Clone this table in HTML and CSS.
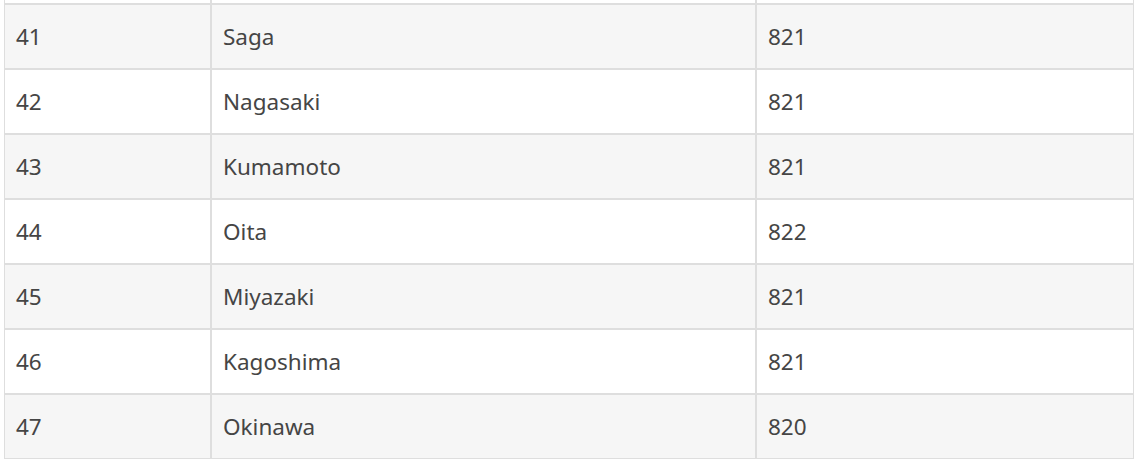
FILE: index.html
```html
<!DOCTYPE html>
<html lang="en">
<head>
<meta charset="utf-8">
<title>Prefectures</title>
<link rel="stylesheet" href="styles.css">
</head>
<body>
<div class="page">
  <table class="data-table">
    <colgroup>
      <col class="col-id">
      <col class="col-name">
      <col class="col-code">
    </colgroup>
    <tbody>
      <tr class="row-even row-partial"><td></td><td></td><td></td></tr>
      <tr class="row-odd"><td>41</td><td>Saga</td><td>821</td></tr>
      <tr class="row-even"><td>42</td><td>Nagasaki</td><td>821</td></tr>
      <tr class="row-odd"><td>43</td><td>Kumamoto</td><td>821</td></tr>
      <tr class="row-even"><td>44</td><td>Oita</td><td>822</td></tr>
      <tr class="row-odd"><td>45</td><td>Miyazaki</td><td>821</td></tr>
      <tr class="row-even"><td>46</td><td>Kagoshima</td><td>821</td></tr>
      <tr class="row-odd"><td>47</td><td>Okinawa</td><td>820</td></tr>
    </tbody>
  </table>
</div>
</body>
</html>
```

FILE: styles.css
```css
html, body {
  margin: 0;
  padding: 0;
  background: #ffffff;
}

.page {
  padding: 0 4px;
  overflow: hidden;
  height: 465px;
}

.data-table {
  width: 1130px;
  margin-top: -61px;
  border-collapse: separate;
  border-spacing: 0;
  table-layout: fixed;
  font-family: "Segoe UI", "Noto Sans", "Open Sans", sans-serif;
  font-size: 22.5px;
  font-weight: 400;
  color: #454545;
}

.col-id { width: 207px; }
.col-name { width: 545px; }
.col-code { width: 378px; }

.data-table td {
  border: 1px solid #dedede;
  padding: 16px 12px 16px 11px;
  line-height: 31px;
  height: 31px;
  white-space: nowrap;
}

.row-odd td {
  background: #f6f6f6;
}

.row-even td {
  background: #ffffff;
}
```
